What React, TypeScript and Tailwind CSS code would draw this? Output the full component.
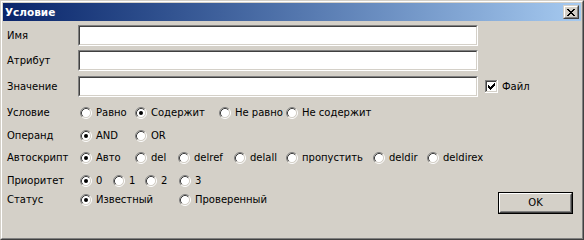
import React from "react";

function Radio({ checked }: { checked?: boolean }) {
  return (
    <svg width="12" height="12" viewBox="0 0 12 12" className="shrink-0 block">
      <circle cx="6" cy="6" r="4.5" fill="#fff" />
      <path d="M2.11 9.89 A5.5 5.5 0 0 1 9.89 2.11" fill="none" stroke="#808080" />
      <path d="M9.89 2.11 A5.5 5.5 0 0 1 2.11 9.89" fill="none" stroke="#fff" />
      <path d="M2.82 9.18 A4.5 4.5 0 0 1 9.18 2.82" fill="none" stroke="#404040" />
      <path d="M9.18 2.82 A4.5 4.5 0 0 1 2.82 9.18" fill="none" stroke="#d4d0c8" />
      {checked && <circle cx="6" cy="6" r="2" fill="#000" />}
    </svg>
  );
}

function RadioItem({ label, checked, className }: { label: string; checked?: boolean; className?: string }) {
  return (
    <div className={"flex items-center gap-[4px] h-[12px] shrink-0 " + (className ?? "")}>
      <Radio checked={checked} />
      <span className="leading-[12px] whitespace-nowrap">{label}</span>
    </div>
  );
}

function Field() {
  return (
    <div className="w-[400px] h-[21px] border border-t-[#808080] border-l-[#808080] border-b-white border-r-white">
      <div className="h-full border border-t-[#404040] border-l-[#404040] border-b-[#d4d0c8] border-r-[#d4d0c8] bg-white" />
    </div>
  );
}

function CheckBox() {
  const cols = [5, 6, 7, 6, 5, 4, 3];
  return (
    <svg width="13" height="13" viewBox="0 0 13 13" className="block shrink-0" shapeRendering="crispEdges">
      <rect x="0" y="0" width="13" height="13" fill="#fff" />
      <rect x="0" y="0" width="12" height="1" fill="#808080" />
      <rect x="0" y="0" width="1" height="12" fill="#808080" />
      <rect x="1" y="1" width="10" height="1" fill="#404040" />
      <rect x="1" y="1" width="1" height="10" fill="#404040" />
      <rect x="1" y="11" width="11" height="1" fill="#d4d0c8" />
      <rect x="11" y="1" width="1" height="11" fill="#d4d0c8" />
      {cols.map((y, i) => (
        <rect key={i} x={3 + i} y={y} width="1" height="3" fill="#000" />
      ))}
    </svg>
  );
}

function CloseIcon() {
  const rows = [0, 1, 2, 3, 4, 5, 6];
  return (
    <svg width="10" height="7" viewBox="0 0 10 7" className="block" shapeRendering="crispEdges">
      {rows.map((i) => (
        <React.Fragment key={i}>
          <rect x={1 + i} y={i} width="2" height="1" fill="#000" />
          <rect x={7 - i} y={i} width="2" height="1" fill="#000" />
        </React.Fragment>
      ))}
    </svg>
  );
}

export default function App() {
  return (
    <div className="w-[584px] h-[240px] border border-t-[#d4d0c8] border-l-[#d4d0c8] border-b-[#404040] border-r-[#404040] font-['DejaVu_Sans',sans-serif] text-[10px] text-black">
      <div className="h-full border border-t-white border-l-white border-b-[#808080] border-r-[#808080] bg-[#d4d0c8] p-px flex flex-col">
        {/* Title bar */}
        <div className="h-[18px] flex items-center justify-between bg-gradient-to-r from-[#0a246a] to-[#a6caf0] pl-[2px] pr-[2px]">
          <span className="text-white font-bold text-[10.5px] leading-none">Условие</span>
          <div className="w-[16px] h-[14px] border border-t-[#d4d0c8] border-l-[#d4d0c8] border-b-[#404040] border-r-[#404040]">
            <div className="h-full border border-t-white border-l-white border-b-[#808080] border-r-[#808080] bg-[#d4d0c8] flex items-center justify-center">
              <CloseIcon />
            </div>
          </div>
        </div>

        {/* Content */}
        <div className="flex flex-col pl-[4px]">
          <div className="flex items-center mt-[4px]">
            <span className="w-[71px]">Имя</span>
            <Field />
          </div>
          <div className="flex items-center mt-[4px]">
            <span className="w-[71px]">Атрибут</span>
            <Field />
          </div>
          <div className="flex items-center mt-[5px]">
            <span className="w-[71px]">Значение</span>
            <Field />
            <div className="flex items-center ml-[7px] gap-[4px]">
              <CheckBox />
              <span>Файл</span>
            </div>
          </div>

          <div className="flex items-center mt-[10px] h-[12px]">
            <span className="w-[73px] leading-[12px]">Условие</span>
            <RadioItem label="Равно" className="w-[55px]" />
            <RadioItem label="Содержит" checked className="w-[84px]" />
            <RadioItem label="Не равно" className="w-[67px]" />
            <RadioItem label="Не содержит" />
          </div>

          <div className="flex items-center mt-[11px] h-[12px]">
            <span className="w-[73px] leading-[12px]">Операнд</span>
            <RadioItem label="AND" checked className="w-[55px]" />
            <RadioItem label="OR" />
          </div>

          <div className="flex items-center mt-[10px] h-[12px]">
            <span className="w-[73px] leading-[12px]">Автоскрипт</span>
            <RadioItem label="Авто" checked className="w-[55px]" />
            <RadioItem label="del" className="w-[43px]" />
            <RadioItem label="delref" className="w-[56px]" />
            <RadioItem label="delall" className="w-[52px]" />
            <RadioItem label="пропустить" className="w-[87px]" />
            <RadioItem label="deldir" className="w-[54px]" />
            <RadioItem label="deldirex" />
          </div>

          <div className="flex items-center mt-[11px] h-[12px]">
            <span className="w-[73px] leading-[12px]">Приоритет</span>
            <RadioItem label="0" checked className="w-[33px]" />
            <RadioItem label="1" className="w-[32px]" />
            <RadioItem label="2" className="w-[34px]" />
            <RadioItem label="3" />
          </div>

          <div className="flex items-start mt-[5px] pr-[8px]">
            <div className="flex items-center mt-[2px] h-[12px]">
              <span className="w-[73px] leading-[12px]">Статус</span>
              <RadioItem label="Известный" checked className="w-[99px]" />
              <RadioItem label="Проверенный" />
            </div>
            <div className="ml-auto w-[75px] h-[22px] border border-black">
              <div className="h-full border border-t-white border-l-white border-b-[#404040] border-r-[#404040]">
                <div className="h-full border border-t-[#d4d0c8] border-l-[#d4d0c8] border-b-[#808080] border-r-[#808080] bg-[#d4d0c8] flex items-center justify-center">
                  <span className="leading-none">OK</span>
                </div>
              </div>
            </div>
          </div>
        </div>
      </div>
    </div>
  );
}
